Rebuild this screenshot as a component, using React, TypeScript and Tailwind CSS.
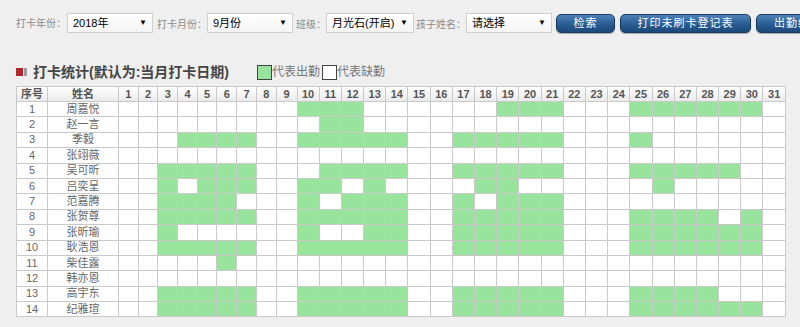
import React from "react";

const students: { name: string; days: number[] }[] = [
  { name: "周嘉悦", days: [10, 11, 12, 19, 20, 21, 25, 26, 27, 28, 29, 30] },
  { name: "赵一言", days: [11, 12] },
  { name: "季毅", days: [4, 5, 6, 7, 10, 11, 12, 13, 14, 17, 18, 19, 20, 21, 25] },
  { name: "张翊薇", days: [] },
  { name: "吴可昕", days: [3, 4, 5, 6, 7, 11, 12, 13, 14, 17, 18, 19, 20, 21, 25, 26, 27, 28, 29] },
  { name: "吕奕呈", days: [3, 5, 6, 7, 10, 11, 13, 18, 19, 26] },
  { name: "范嘉腾", days: [3, 4, 5, 6, 10, 12, 13, 14, 17, 19, 20, 21] },
  { name: "张贺尊", days: [3, 4, 5, 6, 7, 10, 11, 12, 13, 14, 17, 18, 19, 20, 21, 25, 26, 27, 28, 30] },
  { name: "张昕瑜", days: [3, 10, 13, 14, 17, 18, 19, 20, 21, 25, 26, 27, 28, 29, 30] },
  { name: "耿浩恩", days: [3, 4, 5, 6, 7, 10, 11, 12, 13, 14, 17, 18, 19, 20, 21, 25, 26, 27, 28, 29, 30] },
  { name: "柴佳露", days: [6] },
  { name: "韩亦恩", days: [] },
  { name: "高宇东", days: [3, 4, 5, 6, 7, 10, 11, 12, 13, 14, 17, 18, 19, 20, 21, 25, 26, 27, 28] },
  { name: "纪雅瑄", days: [3, 4, 5, 6, 7, 10, 11, 12, 13, 14, 17, 18, 19, 20, 21, 25, 26, 27, 28, 29, 30] },
];

const days = Array.from({ length: 31 }, (_, i) => i + 1);

function Label({ children, width }: { children: React.ReactNode; width: string }) {
  return <span className={`${width} shrink-0 text-[10px] whitespace-nowrap text-[#8a8a8a]`}>{children}</span>;
}

function Select({ value, width }: { value: string; width: string }) {
  return (
    <div
      className={`${width} flex h-[20px] shrink-0 items-center justify-between overflow-hidden border border-[#cfcfcf] bg-linear-to-b from-white to-[#f4f4f4] pl-[5px] pr-[5px] text-[11px] whitespace-nowrap text-black`}
    >
      <span>{value}</span>
      <span className="text-[8px] leading-none">▼</span>
    </div>
  );
}

function Button({ children, width }: { children: React.ReactNode; width: string }) {
  return (
    <button
      className={`${width} flex h-[19px] shrink-0 items-center justify-center rounded-[5px] border border-[#1a3b61] bg-linear-to-b from-[#4d82b8] via-[#2b5f95] to-[#1c4a7a] text-[11px] tracking-[1px] whitespace-nowrap text-white shadow-[0_1px_1px_rgba(0,0,0,0.3)]`}
    >
      {children}
    </button>
  );
}

export default function App() {
  return (
    <div className="h-[327px] w-[800px] overflow-hidden bg-[#efefef] font-['Liberation_Sans','Noto_Sans_CJK_SC',sans-serif]">
      <div className="mt-[13px] flex h-[20px] items-center pl-[16px]">
        <Label width="w-[51px]">打卡年份：</Label>
        <Select value="2018年" width="w-[86px]" />
        <div className="ml-[4px]">
          <Label width="w-[51px]">打卡月份：</Label>
        </div>
        <Select value="9月份" width="w-[86px]" />
        <div className="ml-[3px]">
          <Label width="w-[34px]">班级：</Label>
        </div>
        <Select value="月光石(开启)" width="w-[88px]" />
        <div className="ml-[2px]">
          <Label width="w-[51px]">孩子姓名：</Label>
        </div>
        <Select value="请选择" width="w-[86px]" />
        <div className="ml-[4px] flex gap-[5px]">
          <Button width="w-[59px]">检索</Button>
          <Button width="w-[131px]">打印未刷卡登记表</Button>
          <Button width="w-[96px]">出勤统计表</Button>
        </div>
      </div>

      <div className="mt-[29px] flex h-[20px] items-center pl-[16px]">
        <span className="h-[8px] w-[7px] bg-[#b3262a]" />
        <span className="ml-[1px] h-[8px] w-[3px] bg-[#9a9a9a]" />
        <span className="ml-[6px] text-[14px] font-bold text-[#454545]">打卡统计(默认为:当月打卡日期)</span>
        <span className="ml-[28px] h-[15px] w-[15px] border border-[#444] bg-[#99e49c]" />
        <span className="text-[12px] text-[#777]">代表出勤</span>
        <span className="ml-[2px] h-[15px] w-[15px] border border-[#444] bg-white" />
        <span className="text-[12px] text-[#777]">代表缺勤</span>
      </div>

      <div className="mt-[4px] pl-[16px]">
        <table className="w-[770px] table-fixed border-collapse bg-white text-center text-[11px]">
          <colgroup>
            <col className="w-[31px]" />
            <col className="w-[71px]" />
            {days.map((d) => (
              <col key={d} className={d <= 8 ? "w-[19.7px]" : d === 9 ? "w-[21px]" : "w-[22.2px]"} />
            ))}
          </colgroup>
          <thead>
            <tr className="h-[15px] bg-linear-to-b from-white to-[#e9e9e9]">
              <th className="border border-[#c9c9c9] p-0 leading-[13px] font-bold text-[#555]">序号</th>
              <th className="border border-[#c9c9c9] p-0 leading-[13px] font-bold text-[#555]">姓名</th>
              {days.map((d) => (
                <th key={d} className="border border-[#c9c9c9] p-0 leading-[13px] font-bold text-[#555]">
                  {d}
                </th>
              ))}
            </tr>
          </thead>
          <tbody>
            {students.map((s, i) => (
              <tr key={s.name} className="h-[15.4px]">
                <td className="border border-[#c9c9c9] p-0 leading-none text-[#666]">{i + 1}</td>
                <td className="border border-[#c9c9c9] p-0 leading-none text-[#666]">{s.name}</td>
                {days.map((d) => (
                  <td
                    key={d}
                    className={`border border-[#c9c9c9] p-0 ${s.days.includes(d) ? "bg-[#99e49c]" : "bg-white"}`}
                  />
                ))}
              </tr>
            ))}
          </tbody>
        </table>
      </div>
    </div>
  );
}
